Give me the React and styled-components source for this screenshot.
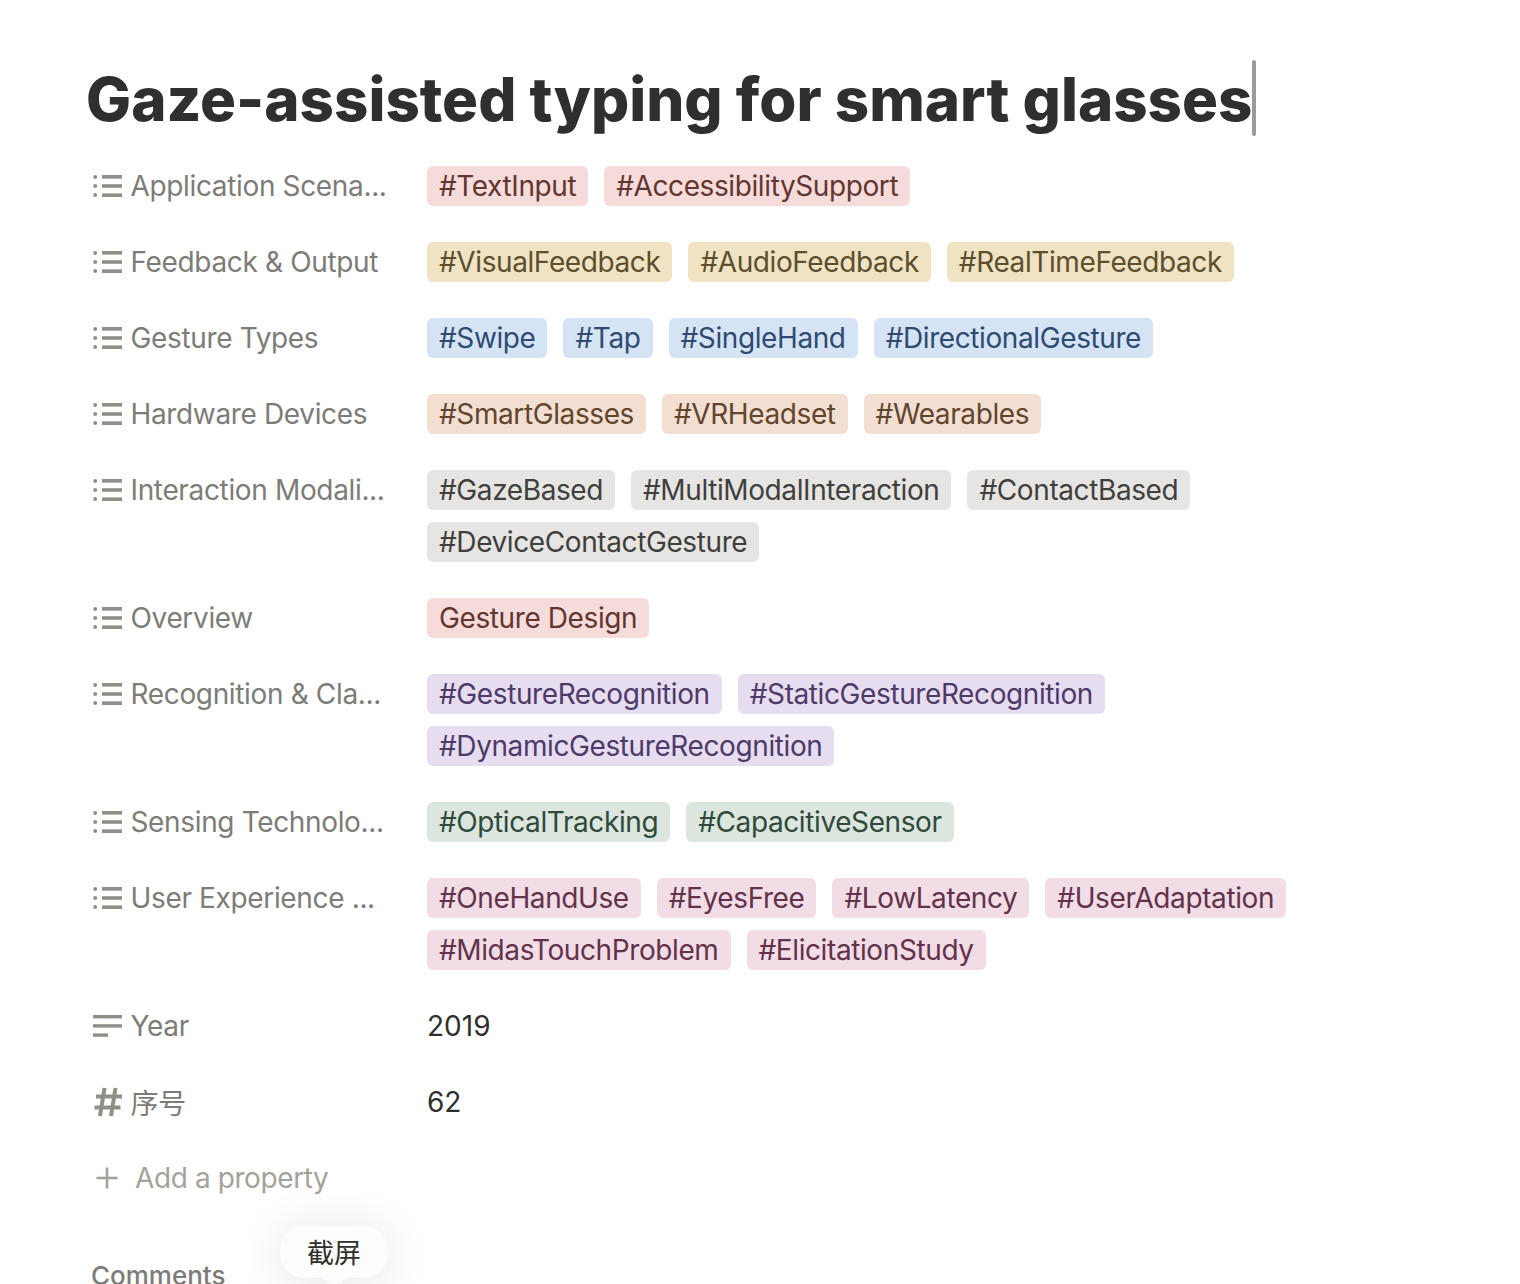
import React from 'react';
import styled, { createGlobalStyle } from 'styled-components';

const GlobalStyle = createGlobalStyle`
  html, body {
    margin: 0;
    padding: 0;
    background: #fff;
    font-family: 'Inter', 'Noto Sans CJK SC', sans-serif;
  }
`;

const colors = {
  red: ['#f5dcdb', '#63352f'],
  yellow: ['#efe3c4', '#5e4e2c'],
  blue: ['#d5e4f5', '#2f4a70'],
  orange: ['#f2dfd2', '#62452d'],
  gray: ['#e6e5e3', '#403f3d'],
  purple: ['#e6ddf0', '#4d3a68'],
  green: ['#dbe6de', '#31493b'],
  pink: ['#f2dce5', '#62324a'],
};

const rows = [
  { label: 'Application Scena...', color: 'red', tags: ['#TextInput', '#AccessibilitySupport'] },
  { label: 'Feedback & Output', color: 'yellow', tags: ['#VisualFeedback', '#AudioFeedback', '#RealTimeFeedback'] },
  { label: 'Gesture Types', color: 'blue', tags: ['#Swipe', '#Tap', '#SingleHand', '#DirectionalGesture'] },
  { label: 'Hardware Devices', color: 'orange', tags: ['#SmartGlasses', '#VRHeadset', '#Wearables'] },
  { label: 'Interaction Modali...', color: 'gray', tags: ['#GazeBased', '#MultiModalInteraction', '#ContactBased', '#DeviceContactGesture'] },
  { label: 'Overview', color: 'red', tags: ['Gesture Design'] },
  { label: 'Recognition & Cla...', color: 'purple', tags: ['#GestureRecognition', '#StaticGestureRecognition', '#DynamicGestureRecognition'] },
  { label: 'Sensing Technolo...', color: 'green', tags: ['#OpticalTracking', '#CapacitiveSensor'] },
  { label: 'User Experience ...', color: 'pink', tags: ['#OneHandUse', '#EyesFree', '#LowLatency', '#UserAdaptation', '#MidasTouchProblem', '#ElicitationStudy'] },
];

function ListIcon() {
  return (
    <svg width="30" height="24" viewBox="0 0 30 24" fill="#8f8e87">
      <circle cx="2.2" cy="3" r="2" />
      <circle cx="2.2" cy="12" r="2" />
      <circle cx="2.2" cy="21" r="2" />
      <rect x="9" y="1" width="20" height="3.6" />
      <rect x="9" y="10.2" width="20" height="3.6" />
      <rect x="9" y="19.4" width="20" height="3.6" />
    </svg>
  );
}

function TextIcon() {
  return (
    <svg width="30" height="24" viewBox="0 0 30 24" fill="#8f8e87">
      <rect x="0" y="1" width="29" height="3.4" />
      <rect x="0" y="10.2" width="29" height="3.4" />
      <rect x="0" y="19.4" width="15" height="3.4" />
    </svg>
  );
}

function NumberIcon() {
  return (
    <svg width="30" height="32" viewBox="0 0 30 32" fill="none" stroke="#8f8e87" strokeWidth="4">
      <path d="M11.5 2 7 30" />
      <path d="M22.5 2 18 30" />
      <path d="M3 10.5h26" />
      <path d="M1.5 21.5h26" />
    </svg>
  );
}

function PlusIcon() {
  return (
    <svg width="24" height="24" viewBox="0 0 24 24" stroke="#a5a29b" strokeWidth="2.6" fill="none">
      <path d="M12 1.5v21" />
      <path d="M1.5 12h21" />
    </svg>
  );
}

export default function App() {
  return (
    <Page>
      <GlobalStyle />
      <Title>
        <TitleText>Gaze-assisted typing for smart glasses</TitleText>
        <Caret />
      </Title>
      <Properties>
        {rows.map((row) => (
          <Row key={row.label}>
            <Label>
              <IconSlot><ListIcon /></IconSlot>
              {row.label}
            </Label>
            <Tags>
              {row.tags.map((tag) => (
                <Tag key={tag} $color={row.color}>{tag}</Tag>
              ))}
            </Tags>
          </Row>
        ))}
        <Row>
          <Label>
            <IconSlot><TextIcon /></IconSlot>
            Year
          </Label>
          <Value>2019</Value>
        </Row>
        <Row>
          <Label>
            <IconSlot><NumberIcon /></IconSlot>
            序号
          </Label>
          <Value>62</Value>
        </Row>
        <AddRow>
          <PlusSlot><PlusIcon /></PlusSlot>
          Add a property
        </AddRow>
      </Properties>
      <Comments>Comments</Comments>
      <Bubble>截屏</Bubble>
    </Page>
  );
}

const Page = styled.div`
  position: relative;
  height: 1284px;
  overflow: hidden;
  box-sizing: border-box;
  padding: 60px 0 0 91px;
  background: #fff;
`;

const Title = styled.h1`
  display: flex;
  align-items: center;
  height: 76px;
  margin: 0 0 30px -5px;
  font-size: 60px;
  font-weight: 800;
  color: #2f2f2d;
  white-space: nowrap;
`;

const TitleText = styled.span`
  padding-top: 2px;
`;

const Caret = styled.span`
  display: block;
  width: 4px;
  height: 76px;
  border-radius: 2px;
  background: #9b9b9b;
`;

const Properties = styled.div`
  display: flex;
  flex-direction: column;
  gap: 36px;
`;

const Row = styled.div`
  display: grid;
  grid-template-columns: 336px 1000px;
  align-items: start;
  min-height: 40px;
`;

const Label = styled.div`
  display: flex;
  align-items: center;
  height: 40px;
  font-size: 28px;
  letter-spacing: -0.35px;
  color: #7d7c78;
  white-space: nowrap;
`;

const IconSlot = styled.span`
  display: flex;
  align-items: center;
  width: 39.5px;
  flex-shrink: 0;
  padding-left: 1.5px;
  box-sizing: border-box;
`;

const Tags = styled.div`
  display: flex;
  flex-wrap: wrap;
  gap: 12px 16px;
`;

const Tag = styled.span`
  height: 40px;
  line-height: 41px;
  padding: 0 12px;
  border-radius: 6px;
  font-size: 28px;
  letter-spacing: -0.4px;
  white-space: nowrap;
  background: ${(p) => colors[p.$color][0]};
  color: ${(p) => colors[p.$color][1]};
`;

const Value = styled.div`
  height: 40px;
  line-height: 41px;
  font-size: 28px;
  color: #2f2f2d;
`;

const AddRow = styled.div`
  display: flex;
  align-items: center;
  height: 40px;
  font-size: 28px;
  letter-spacing: -0.4px;
  color: #a5a29b;
`;

const PlusSlot = styled.span`
  display: flex;
  align-items: center;
  width: 44px;
  padding-left: 4px;
  box-sizing: border-box;
`;

const Comments = styled.div`
  margin-top: 62px;
  font-size: 26px;
  font-weight: 500;
  color: #7d7c78;
`;

const Bubble = styled.div`
  position: absolute;
  left: 280px;
  top: 1226px;
  width: 108px;
  height: 52px;
  border-radius: 24px;
  display: flex;
  align-items: center;
  justify-content: center;
  padding-bottom: 2px;
  box-sizing: border-box;
  background: #fdfdfd;
  font-size: 27px;
  color: #2f2f2d;
  box-shadow: 0 4px 50px rgba(0, 0, 0, 0.11);
  &::after {
    content: '';
    position: absolute;
    left: 38px;
    top: 50px;
    width: 32px;
    height: 12px;
    background: #fdfdfd;
    clip-path: polygon(0 0, 100% 0, 62% 60%, 50% 75%, 38% 60%);
  }
`;
